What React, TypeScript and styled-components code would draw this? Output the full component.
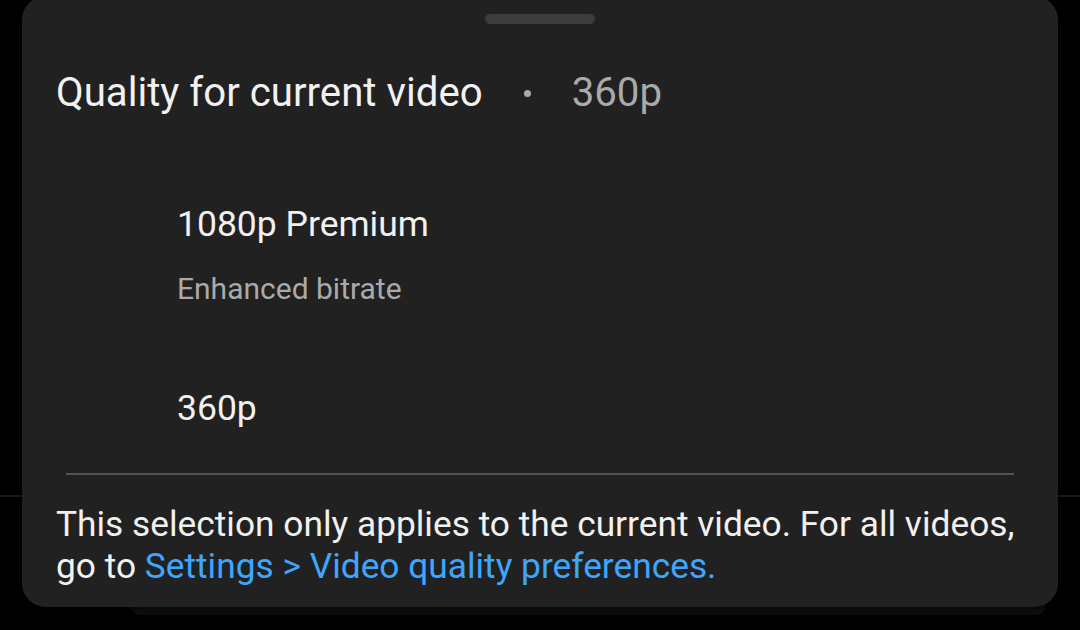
import React from 'react';
import styled, { createGlobalStyle } from 'styled-components';

const GlobalStyle = createGlobalStyle`
  html, body {
    margin: 0;
    padding: 0;
    background: #000;
  }
  body {
    font-family: Roboto, "Noto Sans", "Liberation Sans", sans-serif;
    -webkit-font-smoothing: antialiased;
  }
`;

const Screen = styled.div`
  position: relative;
  width: 1080px;
  height: 630px;
  overflow: hidden;
  background: #000;
`;

// what shows of the page under the sheet
const BackdropLine = styled.div`
  position: absolute;
  left: 0;
  right: 0;
  top: 495px;
  height: 2px;
  background: #1a1a1a;
`;

const BackdropCard = styled.div`
  position: absolute;
  left: 130px;
  right: 34px;
  top: 560px;
  height: 55px;
  border-radius: 0 0 10px 10px;
  background: #0f0f0f;
`;

const Sheet = styled.div`
  position: relative;
  box-sizing: border-box;
  margin: -4px 22px 0;
  height: 611px;
  border-radius: 24px;
  background: #212121;
  display: flex;
  flex-direction: column;
  color: #f1f1f1;
  box-shadow: 0 4px 8px rgba(0, 0, 0, 0.5);
`;

const Handle = styled.div`
  align-self: center;
  width: 110px;
  height: 10px;
  margin-top: 18px;
  border-radius: 5px;
  background: #3d3d3d;
`;

const TitleRow = styled.div`
  display: flex;
  align-items: center;
  padding: 0 34px;
  margin-top: 45px;
  height: 48px;
  font-size: 40.2px;
  line-height: 48px;
`;

const Dot = styled.span`
  width: 7px;
  height: 7px;
  border-radius: 50%;
  background: #aaa;
  margin: 0 41px;
`;

const Current = styled.span`
  color: #aaa;
`;

const Options = styled.div`
  display: flex;
  flex-direction: column;
  padding-left: 155px;
  margin-top: 85px;
`;

const Option = styled.div<{ $gap: number }>`
  display: flex;
  flex-direction: column;
  margin-bottom: ${(p) => p.$gap}px;
`;

const OptionLabel = styled.span`
  font-size: 35.5px;
  line-height: 44px;
  color: #f1f1f1;
`;

const OptionSub = styled.span`
  margin-top: 25px;
  font-size: 30px;
  line-height: 36px;
  color: #aaa;
`;

const Divider = styled.div`
  height: 2px;
  margin: 0 44px;
  background: #535353;
`;

const Footer = styled.p`
  margin: 28px 34px 0;
  font-size: 35.3px;
  line-height: 42px;
  color: #f1f1f1;
`;

const Link = styled.a`
  color: #3ea6ff;
  text-decoration: none;
`;

export default function App() {
  return (
    <>
      <GlobalStyle />
      <Screen>
        <BackdropLine />
        <BackdropCard />
        <Sheet>
          <Handle />
          <TitleRow>
            <span>Quality for current video</span>
            <Dot />
            <Current>360p</Current>
          </TitleRow>
          <Options>
            <Option $gap={79}>
              <OptionLabel>1080p Premium</OptionLabel>
              <OptionSub>Enhanced bitrate</OptionSub>
            </Option>
            <Option $gap={43}>
              <OptionLabel>360p</OptionLabel>
            </Option>
          </Options>
          <Divider />
          <Footer>
            This selection only applies to the current video. For all videos, go to{' '}
            <Link href="#">Settings &gt; Video quality preferences.</Link>
          </Footer>
        </Sheet>
      </Screen>
    </>
  );
}
